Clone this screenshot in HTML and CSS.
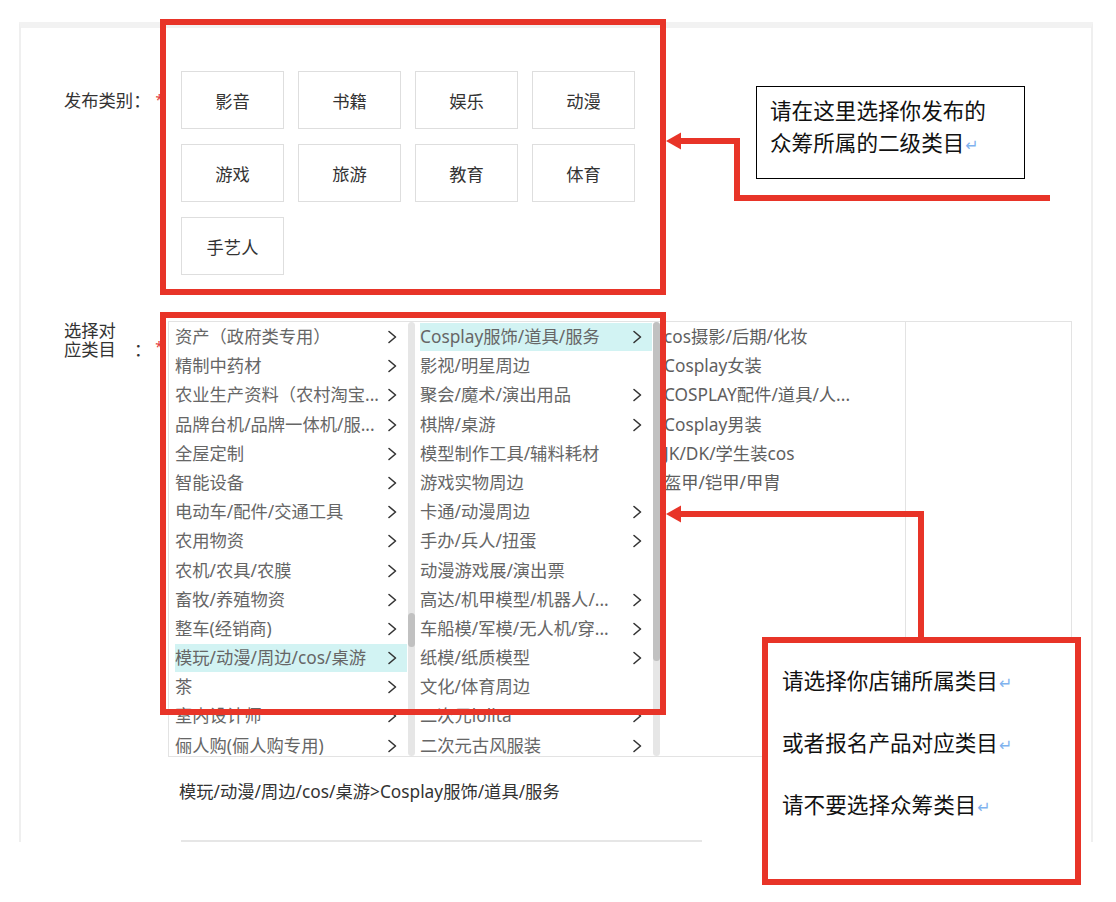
FILE: index.html
```html
<!DOCTYPE html>
<html lang="zh-CN">
<head>
<meta charset="utf-8">
<title>发布类别</title>
<link rel="stylesheet" href="styles.css">
</head>
<body>
<div class="page">
  <div class="panel">
    <div class="form-row row-type">
      <div class="label label-type">发布类别：<span class="req">*</span></div>
      <div class="type-grid">
        <div class="type-btn">影音</div>
        <div class="type-btn">书籍</div>
        <div class="type-btn">娱乐</div>
        <div class="type-btn">动漫</div>
        <div class="type-btn">游戏</div>
        <div class="type-btn">旅游</div>
        <div class="type-btn">教育</div>
        <div class="type-btn">体育</div>
        <div class="type-btn">手艺人</div>
      </div>
    </div>

    <div class="form-row row-cat">
      <div class="label label-cat"><span class="label-text">选择对应类目</span><span class="colon">：</span><span class="req req-cat">*</span></div>
      <div class="cascade">
        <div class="col col-1">
          <div class="list">
            <div class="item"><span class="txt">资产（政府类专用）</span><svg class="chev" viewBox="0 0 10 14"><polyline points="2,1.5 8.5,7 2,12.5"/></svg></div>
            <div class="item"><span class="txt">精制中药材</span><svg class="chev" viewBox="0 0 10 14"><polyline points="2,1.5 8.5,7 2,12.5"/></svg></div>
            <div class="item"><span class="txt">农业生产资料（农村淘宝...</span><svg class="chev" viewBox="0 0 10 14"><polyline points="2,1.5 8.5,7 2,12.5"/></svg></div>
            <div class="item"><span class="txt">品牌台机/品牌一体机/服...</span><svg class="chev" viewBox="0 0 10 14"><polyline points="2,1.5 8.5,7 2,12.5"/></svg></div>
            <div class="item"><span class="txt">全屋定制</span><svg class="chev" viewBox="0 0 10 14"><polyline points="2,1.5 8.5,7 2,12.5"/></svg></div>
            <div class="item"><span class="txt">智能设备</span><svg class="chev" viewBox="0 0 10 14"><polyline points="2,1.5 8.5,7 2,12.5"/></svg></div>
            <div class="item"><span class="txt">电动车/配件/交通工具</span><svg class="chev" viewBox="0 0 10 14"><polyline points="2,1.5 8.5,7 2,12.5"/></svg></div>
            <div class="item"><span class="txt">农用物资</span><svg class="chev" viewBox="0 0 10 14"><polyline points="2,1.5 8.5,7 2,12.5"/></svg></div>
            <div class="item"><span class="txt">农机/农具/农膜</span><svg class="chev" viewBox="0 0 10 14"><polyline points="2,1.5 8.5,7 2,12.5"/></svg></div>
            <div class="item"><span class="txt">畜牧/养殖物资</span><svg class="chev" viewBox="0 0 10 14"><polyline points="2,1.5 8.5,7 2,12.5"/></svg></div>
            <div class="item"><span class="txt">整车(经销商)</span><svg class="chev" viewBox="0 0 10 14"><polyline points="2,1.5 8.5,7 2,12.5"/></svg></div>
            <div class="item active"><span class="txt">模玩/动漫/周边/cos/桌游</span><svg class="chev" viewBox="0 0 10 14"><polyline points="2,1.5 8.5,7 2,12.5"/></svg></div>
            <div class="item"><span class="txt">茶</span><svg class="chev" viewBox="0 0 10 14"><polyline points="2,1.5 8.5,7 2,12.5"/></svg></div>
            <div class="item"><span class="txt">室内设计师</span><svg class="chev" viewBox="0 0 10 14"><polyline points="2,1.5 8.5,7 2,12.5"/></svg></div>
            <div class="item"><span class="txt">俪人购(俪人购专用)</span><svg class="chev" viewBox="0 0 10 14"><polyline points="2,1.5 8.5,7 2,12.5"/></svg></div>
          </div>
          <div class="sbar"><div class="thumb thumb-1"></div></div>
        </div>

        <div class="col col-2">
          <div class="list">
            <div class="item active"><span class="txt">Cosplay服饰/道具/服务</span><svg class="chev" viewBox="0 0 10 14"><polyline points="2,1.5 8.5,7 2,12.5"/></svg></div>
            <div class="item"><span class="txt">影视/明星周边</span></div>
            <div class="item"><span class="txt">聚会/魔术/演出用品</span><svg class="chev" viewBox="0 0 10 14"><polyline points="2,1.5 8.5,7 2,12.5"/></svg></div>
            <div class="item"><span class="txt">棋牌/桌游</span><svg class="chev" viewBox="0 0 10 14"><polyline points="2,1.5 8.5,7 2,12.5"/></svg></div>
            <div class="item"><span class="txt">模型制作工具/辅料耗材</span></div>
            <div class="item"><span class="txt">游戏实物周边</span></div>
            <div class="item"><span class="txt">卡通/动漫周边</span><svg class="chev" viewBox="0 0 10 14"><polyline points="2,1.5 8.5,7 2,12.5"/></svg></div>
            <div class="item"><span class="txt">手办/兵人/扭蛋</span><svg class="chev" viewBox="0 0 10 14"><polyline points="2,1.5 8.5,7 2,12.5"/></svg></div>
            <div class="item"><span class="txt">动漫游戏展/演出票</span></div>
            <div class="item"><span class="txt">高达/机甲模型/机器人/...</span><svg class="chev" viewBox="0 0 10 14"><polyline points="2,1.5 8.5,7 2,12.5"/></svg></div>
            <div class="item"><span class="txt">车船模/军模/无人机/穿...</span><svg class="chev" viewBox="0 0 10 14"><polyline points="2,1.5 8.5,7 2,12.5"/></svg></div>
            <div class="item"><span class="txt">纸模/纸质模型</span><svg class="chev" viewBox="0 0 10 14"><polyline points="2,1.5 8.5,7 2,12.5"/></svg></div>
            <div class="item"><span class="txt">文化/体育周边</span></div>
            <div class="item"><span class="txt">二次元lolita</span><svg class="chev" viewBox="0 0 10 14"><polyline points="2,1.5 8.5,7 2,12.5"/></svg></div>
            <div class="item"><span class="txt">二次元古风服装</span><svg class="chev" viewBox="0 0 10 14"><polyline points="2,1.5 8.5,7 2,12.5"/></svg></div>
          </div>
          <div class="sbar"><div class="thumb thumb-2"></div></div>
        </div>

        <div class="col col-3">
          <div class="list">
            <div class="item"><span class="txt">cos摄影/后期/化妆</span></div>
            <div class="item"><span class="txt">Cosplay女装</span></div>
            <div class="item"><span class="txt">COSPLAY配件/道具/人...</span></div>
            <div class="item"><span class="txt">Cosplay男装</span></div>
            <div class="item"><span class="txt">JK/DK/学生装cos</span></div>
            <div class="item"><span class="txt">盔甲/铠甲/甲胄</span></div>
          </div>
        </div>

        <div class="col col-4"></div>
      </div>
    </div>

    <div class="result">模玩/动漫/周边/cos/桌游&gt;Cosplay服饰/道具/服务</div>
    <div class="input-stub"></div>
  </div>

  <div class="redbox box-types"></div>
  <div class="redbox box-cascade"></div>

  <div class="callout callout-top">请在这里选择你发布的<br>众筹所属的二级类目<span class="ret">↵</span></div>

  <div class="redbox box-note">
    <p class="note-line">请选择你店铺所属类目<span class="ret">↵</span></p>
    <p class="note-line">或者报名产品对应类目<span class="ret">↵</span></p>
    <p class="note-line">请不要选择众筹类目<span class="ret">↵</span></p>
  </div>

  <svg class="arrows" width="1116" height="902" viewBox="0 0 1116 902">
    <polyline class="arrow-line" points="678,141 737,141 737,198 1050,198"/>
    <polygon class="arrow-head" points="666,141 681,132.5 681,149.5"/>
    <polyline class="arrow-line" points="678,514 921,514 921,640"/>
    <polygon class="arrow-head" points="666,514 681,505.5 681,522.5"/>
  </svg>
</div>
</body>
</html>
```

FILE: styles.css
```css
html, body {
  margin: 0;
  padding: 0;
  background: #ffffff;
}

.page {
  position: relative;
  width: 1116px;
  height: 902px;
  overflow: hidden;
  padding: 22px 0 0 19px;
  box-sizing: border-box;
  font-family: "Noto Sans", "Noto Sans CJK SC", sans-serif;
  color: #333333;
}

.panel {
  width: 1074px;
  height: 820px;
  box-sizing: border-box;
  border-top: 6px solid #f2f2f2;
  border-left: 2px solid #efefef;
  border-right: 2px solid #efefef;
  padding: 43px 0 0 43px;
  overflow: hidden;
  background: #ffffff;
}

.form-row {
  display: flex;
  align-items: flex-start;
}

.label {
  width: 104px;
  flex: none;
  font-size: 17.3px;
  color: #333333;
  white-space: nowrap;
}

.label-type {
  line-height: 24px;
  margin-top: 17px;
}

.req {
  color: #e4393c;
  font-size: 14px;
  margin-left: 5px;
  vertical-align: 2px;
}

.type-grid {
  margin-left: 13px;
  display: grid;
  grid-template-columns: repeat(4, 103px);
  grid-auto-rows: 58px;
  column-gap: 14px;
  row-gap: 15px;
}

.type-btn {
  border: 1px solid #dedede;
  display: flex;
  align-items: center;
  justify-content: center;
  font-size: 17.3px;
  color: #333333;
  background: #ffffff;
}

.row-cat {
  margin-top: 46px;
}

.label-cat {
  display: flex;
  align-items: flex-end;
  padding-top: 1px;
  line-height: 18.5px;
}

.label-text {
  width: 53px;
  white-space: normal;
  word-break: break-all;
}

.colon {
  margin-left: 17px;
}

.req-cat {
  margin-left: 4px;
  vertical-align: 0;
  line-height: 18.5px;
  position: relative;
  top: -3px;
}

.cascade {
  width: 904px;
  height: 436px;
  box-sizing: border-box;
  border: 1px solid #e3e3e3;
  display: flex;
  overflow: hidden;
}

.col {
  display: flex;
  height: 100%;
  box-sizing: border-box;
  flex: none;
}

.col-1 {
  width: 246px;
  padding-left: 6px;
}

.col-2 {
  width: 245px;
  padding-left: 5px;
}

.col-3 {
  width: 246px;
  padding-left: 4px;
  border-right: 1px solid #e3e3e3;
}

.col-4 {
  flex: 1;
}

.list {
  width: 232px;
  flex: none;
  padding-top: 1px;
  overflow: hidden;
}

.item {
  height: 28px;
  margin-bottom: 1.2px;
  display: flex;
  align-items: center;
  padding-right: 10px;
  font-size: 17.3px;
  line-height: 28px;
  color: #666666;
}

.item.active {
  background: #d2f3f3;
}

.txt {
  flex: 1;
  min-width: 0;
  white-space: nowrap;
  overflow: hidden;
}

.chev {
  width: 10px;
  height: 14px;
  flex: none;
  margin-left: 4px;
}

.chev polyline {
  fill: none;
  stroke: #333333;
  stroke-width: 1.6;
  stroke-linecap: round;
  stroke-linejoin: round;
}

.sbar {
  width: 7px;
  height: 100%;
  margin-left: 1px;
  flex: none;
  background: #e6e6e6;
  border-radius: 4px;
}

.thumb {
  width: 100%;
  background: #c1c1c1;
  border-radius: 4px;
}

.thumb-1 {
  margin-top: 291px;
  height: 34px;
}

.thumb-2 {
  margin-top: 0;
  height: 339px;
}

.col-3 .item {
  color: #5f5f5f;
}

.result {
  margin-top: 23px;
  margin-left: 115px;
  font-size: 17.3px;
  line-height: 24px;
  color: #333333;
  white-space: nowrap;
}

.input-stub {
  margin-top: 36px;
  margin-left: 117px;
  width: 519px;
  height: 30px;
  border-top: 2px solid #e6e6e6;
  border-left: 1px solid #e6e6e6;
  border-right: 1px solid #e6e6e6;
}

/* annotation overlays */
.redbox {
  position: absolute;
  border: 6px solid #e83428;
  box-sizing: border-box;
}

.box-types {
  left: 160px;
  top: 19px;
  width: 506px;
  height: 276px;
}

.box-cascade {
  left: 160px;
  top: 312px;
  width: 506px;
  height: 403px;
}

.box-note {
  left: 762px;
  top: 637px;
  width: 319px;
  height: 248px;
  background: #ffffff;
  padding: 6px 0 0 14px;
  font-family: "Noto Sans CJK SC", sans-serif;
  font-size: 21.6px;
  color: #111111;
}

.note-line {
  margin: 0;
  height: 62px;
  line-height: 62px;
  white-space: nowrap;
}

.callout {
  position: absolute;
  box-sizing: border-box;
  background: #ffffff;
  border: 1px solid #000000;
}

.callout-top {
  left: 756px;
  top: 86px;
  width: 269px;
  height: 93px;
  padding: 7px 0 0 13px;
  font-family: "Noto Sans CJK SC", sans-serif;
  font-size: 21.6px;
  line-height: 32px;
  color: #111111;
  white-space: nowrap;
}

.ret {
  font-family: "DejaVu Sans", sans-serif;
  font-size: 16px;
  line-height: 0;
  color: #7fb2ee;
  margin-left: 1px;
}

.arrows {
  position: absolute;
  left: 0;
  top: 0;
  pointer-events: none;
}

.arrow-line {
  fill: none;
  stroke: #e83428;
  stroke-width: 6;
  stroke-linejoin: miter;
}

.arrow-head {
  fill: #e83428;
}
```
